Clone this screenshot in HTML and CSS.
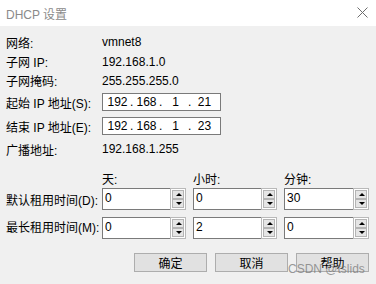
FILE: index.html
```html
<!DOCTYPE html>
<html lang="zh-CN">

<head>
  <meta charset="UTF-8">
  <title>DHCP 设置</title>
  <link rel="stylesheet" href="styles.css">
</head>

<body>
  <div class="window">
    <!-- 标题栏 -->
    <div class="titlebar">
      <span class="title">DHCP 设置</span>
      <svg class="close" width="11" height="11" viewBox="0 0 11 11">
        <path d="M0.5 0.5 L10.5 10.5 M10.5 0.5 L0.5 10.5" stroke="#6d6d6d" stroke-width="1" fill="none" />
      </svg>
    </div>

    <div class="content">
      <div class="row info">
        <span class="label">网络:</span>
        <span class="value">vmnet8</span>
      </div>
      <div class="row info">
        <span class="label">子网 IP:</span>
        <span class="value">192.168.1.0</span>
      </div>
      <div class="row info">
        <span class="label">子网掩码:</span>
        <span class="value">255.255.255.0</span>
      </div>

      <div class="row ip-row">
        <span class="label">起始 IP 地址(S):</span>
        <div class="ip-box">
          <span class="octet">192</span><span class="dot">.</span>
          <span class="octet">168</span><span class="dot">.</span>
          <span class="octet">1</span><span class="dot">.</span>
          <span class="octet">21</span>
        </div>
      </div>
      <div class="row ip-row">
        <span class="label">结束 IP 地址(E):</span>
        <div class="ip-box">
          <span class="octet">192</span><span class="dot">.</span>
          <span class="octet">168</span><span class="dot">.</span>
          <span class="octet">1</span><span class="dot">.</span>
          <span class="octet">23</span>
        </div>
      </div>
      <div class="row broadcast">
        <span class="label">广播地址:</span>
        <span class="value">192.168.1.255</span>
      </div>

      <!-- 租用时间 -->
      <div class="lease">
        <span></span>
        <span class="unit">天:</span>
        <span class="unit">小时:</span>
        <span class="unit">分钟:</span>

        <span class="lease-label">默认租用时间(D):</span>
        <div class="spin"><span class="spin-field">0</span><span class="spin-btns"><i class="up"></i><i class="down"></i></span></div>
        <div class="spin"><span class="spin-field">0</span><span class="spin-btns"><i class="up"></i><i class="down"></i></span></div>
        <div class="spin"><span class="spin-field">30</span><span class="spin-btns"><i class="up"></i><i class="down"></i></span></div>

        <span class="lease-label">最长租用时间(M):</span>
        <div class="spin"><span class="spin-field">0</span><span class="spin-btns"><i class="up"></i><i class="down"></i></span></div>
        <div class="spin"><span class="spin-field">2</span><span class="spin-btns"><i class="up"></i><i class="down"></i></span></div>
        <div class="spin"><span class="spin-field">0</span><span class="spin-btns"><i class="up"></i><i class="down"></i></span></div>
      </div>

      <div class="buttons">
        <button class="btn">确定</button>
        <button class="btn">取消</button>
        <button class="btn">帮助</button>
      </div>
    </div>

    <div class="watermark">CSDN @tslids</div>
  </div>
</body>

</html>
```

FILE: styles.css
```css
body {
  margin: 0;
  font-family: "Liberation Sans", "Noto Sans CJK SC", sans-serif;
  font-size: 12px;
  color: #000;
}

.window {
  position: relative;
  width: 376px;
  height: 284px;
  background: #f0f0f0;
  overflow: hidden;
}

.titlebar {
  height: 26px;
  background: #fff;
  display: flex;
  align-items: center;
  justify-content: space-between;
  padding: 0 8px 0 6px;
}

.title {
  color: #8a8a8a;
}

.close {
  margin-top: -2px;
}

.content {
  padding: 6px 7px 0 6px;
}

.row {
  display: flex;
  align-items: center;
}

.label {
  width: 96px;
  white-space: nowrap;
}

.info {
  height: 19px;
}

.info:first-child {
  height: 20px;
}

.ip-row {
  height: 24px;
}

.broadcast {
  height: 22px;
}

.ip-box {
  width: 115px;
  height: 16px;
  border: 1px solid #7a7a7a;
  background: #fff;
  display: flex;
  align-items: center;
  padding-left: 2px;
}

.octet {
  width: 25px;
  text-align: center;
}

.dot {
  width: 4px;
}

.lease {
  margin-top: 8px;
  display: grid;
  grid-template-columns: 89px 84px 84px 85px;
  grid-template-rows: 20px 22px 29px;
  column-gap: 7px;
  align-items: center;
}

.lease-label {
  white-space: nowrap;
}

.lease .spin:nth-last-child(-n+3) {
  align-self: end;
}

.lease .lease-label:nth-last-child(4) {
  align-self: end;
  line-height: 22px;
}

.spin {
  display: flex;
  height: 22px;
}

.spin-field {
  flex: 1;
  background: #fff;
  border: 1px solid #7a7a7a;
  border-right: none;
  padding-left: 2px;
  line-height: 19px;
}

.spin-btns {
  width: 16px;
  border: 1px solid #b9b9b9;
  background: #fff;
  display: flex;
  flex-direction: column;
  justify-content: space-between;
  padding: 1px;
  box-sizing: border-box;
}

.spin-btns i {
  height: 8px;
  background: #e5e5e5;
  border: 1px solid #b4b4b4;
  position: relative;
}

.spin-btns i::after {
  content: "";
  position: absolute;
  left: 3px;
  top: 2px;
  border-left: 3px solid transparent;
  border-right: 3px solid transparent;
}

.spin-btns .up::after {
  border-bottom: 3px solid #000;
}

.spin-btns .down::after {
  border-top: 3px solid #000;
}

.buttons {
  display: flex;
  justify-content: flex-end;
  gap: 8px;
  margin-top: 14px;
}

.btn {
  width: 73px;
  height: 19px;
  padding: 0;
  background: #e1e1e1;
  border: 1px solid #adadad;
  font-family: inherit;
  font-size: 12px;
  color: #000;
}

.watermark {
  position: absolute;
  left: 288px;
  top: 262px;
  color: rgba(120, 120, 120, 0.75);
  font-family: "Liberation Sans", sans-serif;
}
```
